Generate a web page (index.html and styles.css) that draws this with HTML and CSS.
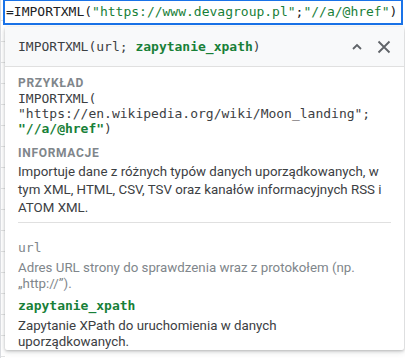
FILE: index.html
```html
<!DOCTYPE html>
<html lang="pl">
<head>
    <meta charset="UTF-8">
    <title>IMPORTXML</title>
    <link rel="stylesheet" href="styles.css">
</head>
<body>
    <div class="sheet">
        <div class="formula-box">
            <span>=IMPORTXML(</span><span class="str">"https://www.devagroup.pl"</span><span>;</span><span class="str">"//a/@href"</span><span>)</span>
        </div>
        <div class="help-card">
            <div class="help-header">
                <div class="signature">IMPORTXML(url; <b class="active">zapytanie_xpath</b>)</div>
                <div class="help-actions">
                    <svg class="icon" width="14" height="14" viewBox="0 0 14 14"><path d="M3 9 L7 5 L11 9" fill="none" stroke="#5f6368" stroke-width="1.8"/></svg>
                    <svg class="icon" width="16" height="16" viewBox="0 0 16 16"><path d="M2.5 2.5 L13.5 13.5 M13.5 2.5 L2.5 13.5" fill="none" stroke="#5f6368" stroke-width="1.8"/></svg>
                </div>
            </div>
            <div class="help-body">
                <div class="section-title">PRZYKŁAD</div>
                <div class="code">IMPORTXML(<br>"https://en.wikipedia.org/wiki/Moon_landing";<br><b class="active">"//a/@href"</b>)</div>

                <div class="section-title info">INFORMACJE</div>
                <p class="desc info-text">Importuje dane z różnych typów danych uporządkowanych, w tym XML, HTML, CSV, TSV oraz kanałów informacyjnych RSS i ATOM XML.</p>

                <hr class="divider">

                <div class="param">
                    <div class="param-name">url</div>
                    <p class="desc muted">Adres URL strony do sprawdzenia wraz z protokołem (np. „http://”).</p>
                </div>
                <div class="param">
                    <div class="param-name active">zapytanie_xpath</div>
                    <p class="desc">Zapytanie XPath do uruchomienia w danych uporządkowanych.</p>
                </div>
            </div>
        </div>
    </div>
</body>
</html>
```

FILE: styles.css
```css
html, body {
    margin: 0;
    padding: 0;
    background-color: #fff;
    font-family: Roboto, 'Noto Sans', sans-serif;
    color: #3c4043;
}
.sheet {
    height: 358px;
    overflow: hidden;
    background-color: #fff;
    background-image: repeating-linear-gradient(to bottom, transparent 0, transparent 20px, #e2e3e3 20px, #e2e3e3 21px);
    background-size: 4px 100%;
    background-repeat: no-repeat;
    border-left: 1px solid #dadce0;
}
.formula-box {
    margin: 0 2px;
    height: 25px;
    box-sizing: border-box;
    border: 2px solid #1a73e8;
    border-top-width: 1px;
    padding-left: 1px;
    font-family: 'DejaVu Sans Mono', monospace;
    font-size: 13px;
    line-height: 21px;
    color: #202124;
    white-space: nowrap;
}
.formula-box .str {
    color: #188038;
}
.help-card {
    margin: 2px 1px 0 4px;
    background: #fff;
    box-shadow: 0 1px 3px rgba(60, 64, 67, 0.3), 0 2px 6px rgba(60, 64, 67, 0.15);
    border-radius: 2px;
}
.help-header {
    display: flex;
    align-items: center;
    justify-content: space-between;
    height: 39px;
    padding: 0 12px 0 13px;
    background-color: #f8f9fa;
    border-bottom: 1px solid #e0e0e0;
}
.signature {
    font-family: 'DejaVu Sans Mono', monospace;
    font-size: 13px;
    color: #3c4043;
    white-space: nowrap;
}
.active {
    color: #188038;
    font-weight: bold;
}
.help-actions {
    display: flex;
    align-items: center;
    gap: 12px;
}
.icon {
    display: block;
}
.help-body {
    padding: 8px 13px 0 13px;
}
.section-title {
    font-size: 12px;
    font-weight: bold;
    letter-spacing: 0.7px;
    color: #80868b;
    line-height: 16px;
}
.section-title.info {
    margin-top: 9px;
}
.code {
    font-family: 'DejaVu Sans Mono', monospace;
    font-size: 13px;
    line-height: 15px;
    color: #3c4043;
    white-space: nowrap;
}
.desc {
    margin: 0;
    font-size: 13.3px;
    line-height: 16px;
    color: #3c4043;
}
.info-text {
    margin-top: 2px;
    line-height: 18px;
}
.desc.muted {
    color: #80868b;
}
.divider {
    border: none;
    border-top: 1px solid #e0e0e0;
    margin: 5px 0 16px 0;
}
.param {
    margin-bottom: 5px;
}
.param .desc {
    margin-top: 3px;
    max-width: 350px;
}
.param-name {
    font-family: 'DejaVu Sans Mono', monospace;
    font-size: 13px;
    line-height: 18px;
    color: #80868b;
}
.param-name.active {
    color: #188038;
}
```
